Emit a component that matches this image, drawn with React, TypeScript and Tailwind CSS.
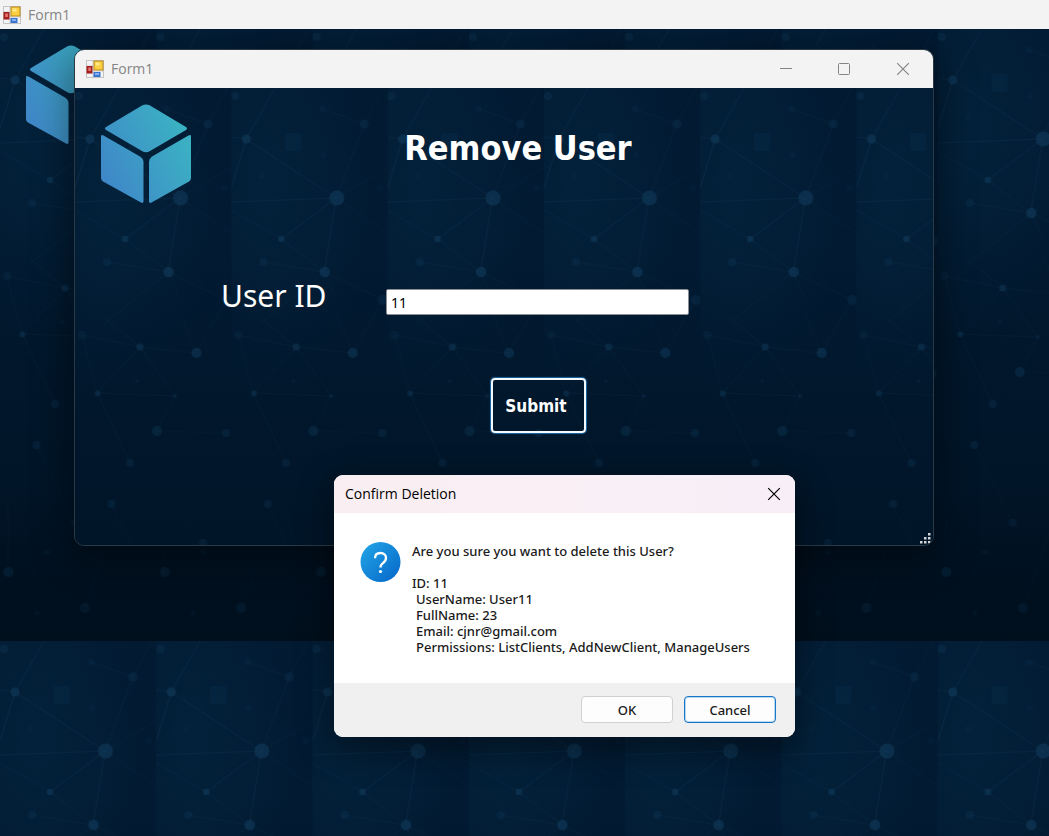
import { useId } from "react";

type Dot = [x: number, y: number, r: number, opacity: number];
type Line = [x1: number, y1: number, x2: number, y2: number, opacity: number];

const DOTS: Dot[] = [
  [4, 8, 4, 0.45],
  [15, 51, 4.5, 0.85],
  [91, 21, 3, 0.25],
  [133, 36, 4.5, 0.4],
  [92, 67, 3, 0.2],
  [30, 88, 2.5, 0.15],
  [149, 100, 3, 0.12],
  [105.5, 110, 7.5, 0.85],
  [50, 151, 3.2, 0.85],
  [32, 174, 4, 0.4],
  [93.5, 184, 5.2, 0.85],
  [152, 212, 5, 0.4],
  [7, 247, 4, 0.25],
  [65, 259, 3.5, 0.65],
  [121.5, 265, 5, 0.75],
  [22.5, 305.5, 3, 0.6],
  [100, 308, 2, 0.4],
  [62, 293, 2, 0.25],
  [82, 343, 5, 0.55],
  [151, 345, 4, 0.45],
  [55, 375, 4, 0.4],
  [36.5, 416, 4, 0.4],
  [128, 455, 4, 0.35],
  [75, 494, 4, 0.3],
  [47, 523, 3, 0.2],
  [8.5, 543, 5, 0.4],
  [85, 579, 5, 0.3],
  [37, 584, 2.5, 0.2],
];

const LINES: Line[] = [
  [15, 51, 44, 0, 0.6],
  [15, 51, 0, 100, 0.8],
  [0, 49, 15, 51, 0.5],
  [15, 51, 105, 110, 0.6],
  [91, 21, 133, 36, 0.35],
  [133, 36, 152, 0, 0.35],
  [133, 36, 105, 110, 0.4],
  [0, 114, 105, 110, 0.6],
  [0, 122, 50, 151, 0.35],
  [105, 110, 156, 80, 0.25],
  [105, 110, 156, 145, 0.25],
  [105, 110, 50, 151, 0.7],
  [105, 110, 93, 184, 0.7],
  [50, 151, 93, 184, 0.4],
  [32, 174, 93, 184, 0.4],
  [93, 184, 30, 235, 0.3],
  [93, 184, 104, 208, 0.3],
  [93, 184, 152, 212, 0.3],
  [30, 230, 65, 259, 0.35],
  [7, 247, 65, 259, 0.3],
  [65, 259, 121, 265, 0.35],
  [121, 265, 105, 225, 0.3],
  [121, 265, 152, 212, 0.35],
  [65, 259, 22, 305, 0.35],
  [65, 259, 100, 308, 0.35],
  [22, 305, 100, 308, 0.4],
  [7, 247, 22, 305, 0.25],
  [22, 305, 55, 375, 0.35],
  [100, 308, 82, 343, 0.25],
  [82, 343, 151, 345, 0.2],
  [36, 416, 75, 494, 0.2],
  [8, 543, 8, 470, 0.25],
  [85, 579, 128, 455, 0.15],
];

function NetworkBackdrop() {
  const id = useId();
  return (
    <svg aria-hidden="true" className="absolute inset-0 h-full w-full">
      <defs>
        <linearGradient id={`${id}-base`} x1="0" y1="0" x2="0" y2="1">
          <stop offset="0" stopColor="#021a32" />
          <stop offset="0.25" stopColor="#021b33" />
          <stop offset="0.5" stopColor="#01172c" />
          <stop offset="0.75" stopColor="#011528" />
          <stop offset="0.9" stopColor="#00101f" />
          <stop offset="1" stopColor="#000f1c" />
        </linearGradient>
        <radialGradient id={`${id}-glow`} gradientUnits="userSpaceOnUse" cx="35" cy="45" r="110" gradientTransform="scale(1 2)">
          <stop offset="0" stopColor="#062d48" stopOpacity="0.36" />
          <stop offset="1" stopColor="#062d48" stopOpacity="0" />
        </radialGradient>
        <pattern id={`${id}-tile`} width="156.3" height="612" patternUnits="userSpaceOnUse">
          <rect width="157" height="612" fill={`url(#${id}-base)`} />
          <rect width="157" height="612" fill={`url(#${id}-glow)`} />
          <rect x="54" y="45" width="16" height="18" rx="2" fill="#0a3655" opacity="0.22" />
          {LINES.map(([x1, y1, x2, y2, opacity], i) => (
            <line key={i} x1={x1} y1={y1} x2={x2} y2={y2} stroke="#1d4a6b" strokeWidth="0.8" opacity={opacity * 0.34} />
          ))}
          {DOTS.map(([cx, cy, r, opacity], i) => (
            <circle key={i} cx={cx} cy={cy} r={r} fill="#0f3a5c" opacity={opacity * 0.68} />
          ))}
        </pattern>
      </defs>
      <rect width="100%" height="100%" fill={`url(#${id}-tile)`} />
    </svg>
  );
}

function FormIcon() {
  return (
    <svg aria-hidden="true" viewBox="0 0 18 18" className="size-[18px] shrink-0">
      <rect x="0.5" y="0.5" width="17" height="17" fill="#f4f4f4" stroke="#c4c4c4" />
      <path d="M1 6h7M7 1v16M7 11h10M1 13h6" stroke="#cccccc" fill="none" />
      <rect x="7.500" y="0.500" width="10" height="10" fill="#b88a1c" />
      <rect x="8.500" y="1.500" width="8" height="8" fill="#fbcf3f" />
      <rect x="9.500" y="2.500" width="4" height="3" fill="#ffe98c" />
      <rect x="0.500" y="6" width="6" height="7.500" fill="#a32020" />
      <rect x="2.300" y="7.500" width="2.500" height="3.500" fill="#ea7a70" />
      <rect x="7.500" y="12" width="7" height="5" fill="#3b74cd" />
      <rect x="9" y="13" width="4" height="2" fill="#83b2f5" />
    </svg>
  );
}

function CubeLogo() {
  const id = useId();
  return (
    <svg role="img" aria-label="Cube logo" viewBox="0 0 92 100" className="block h-[100px] w-[92px]">
      <defs>
        <linearGradient id={id} gradientUnits="userSpaceOnUse" x1="5" y1="78" x2="90" y2="35">
          <stop offset="0" stopColor="#3f87c8" />
          <stop offset="1" stopColor="#3bb2c3" />
        </linearGradient>
      </defs>
      <g fill={`url(#${id})`}>
        <path d="M42 1.6Q46 -0.6 50 1.6L86 23Q88 24.5 86 26L50 47Q46 49.4 42 47L6 26Q4 24.5 6 23Z" />
        <path d="M1 32.5Q1 30.2 3.5 31.6L40 52.5Q43.5 54.7 43.5 58V97Q43.500 100 41 98.600L3 77.500Q1 76.300 1 74Z" />
        <path d="M91 32.500Q91 30.200 88.500 31.600L52 52.500Q49 54.700 49 58V97Q49 100 51.500 98.600L89 77.500Q91 76.300 91 74Z" />
      </g>
    </svg>
  );
}

function CloseGlyph() {
  return (
    <svg aria-hidden="true" viewBox="0 0 14 14" className="size-[14px]">
      <path d="M1.200 1.200 12.800 12.800M12.800 1.200 1.200 12.800" stroke="currentColor" strokeWidth="1.200" fill="none" />
    </svg>
  );
}

function RemoveUserWindow() {
  return (
    <section
      aria-label="Form1"
      className="absolute top-5 left-[74px] flex h-[497px] w-[860px] flex-col overflow-hidden rounded-[10px] border border-[#2b3944] shadow-[0_10px_36px_6px_rgba(0,0,0,0.4)]"
    >
      <header className="flex h-[38px] shrink-0 items-center gap-[7px] bg-[#f3f3f3] pl-[11px] text-[#858585]">
        <FormIcon />
        <span className="flex-1 text-[14px] leading-5">Form1</span>
        <div className="flex h-full">
          <button type="button" aria-label="Minimize" className="flex h-full w-[58px] items-center justify-center">
            <svg aria-hidden="true" viewBox="0 0 14 14" className="size-[14px]">
              <path d="M1 6.500h12" stroke="currentColor" />
            </svg>
          </button>
          <button type="button" aria-label="Maximize" className="flex h-full w-[58px] items-center justify-center">
            <svg aria-hidden="true" viewBox="0 0 14 14" className="size-[14px]">
              <rect x="1.500" y="1.500" width="11" height="11" rx="1" fill="none" stroke="currentColor" />
            </svg>
          </button>
          <button type="button" aria-label="Close" className="flex h-full w-[60px] items-center justify-center">
            <CloseGlyph />
          </button>
        </div>
      </header>
      <div className="relative flex-1">
        <NetworkBackdrop />
        <div className="absolute top-4 left-[25px]">
          <CubeLogo />
        </div>
        <form
          className="relative flex flex-col items-center pt-[38px] font-['Noto_Sans',sans-serif]"
          onSubmit={(event) => event.preventDefault()}
        >
          <h1 className="pl-7 font-['DejaVu_Sans_Condensed','Noto_Sans',sans-serif] text-[34px] leading-11 font-bold text-white">
            Remove User
          </h1>
          <div className="flex items-center gap-[62px] self-start pt-[104px] pl-[146px]">
            <label htmlFor="user-id" className="w-[103px] text-[30px] leading-11 whitespace-nowrap text-white">
              User ID
            </label>
            <input
              id="user-id"
              type="text"
              defaultValue="11"
              className="mt-3 h-[26px] w-[303px] rounded-[2px] border border-[#8b8f94] bg-white px-1 text-[14px] leading-5 text-black outline-none"
            />
          </div>
          <button
            type="submit"
            className="mt-[60px] ml-[68px] h-[55px] w-[95px] rounded-[4px] border-2 border-[#f2faff] pr-1 font-['DejaVu_Sans_Condensed','Noto_Sans',sans-serif] text-[17px] leading-5 font-bold text-white shadow-[0_0_1px_1px_#1c6ba8]"
          >
            Submit
          </button>
        </form>
        <svg aria-hidden="true" viewBox="0 0 12 12" className="absolute right-px bottom-px size-3 text-[#d4d4d4]">
          <path d="M8 1h2.500v2.500H8zM4 5h2.500v2.500H4zM8 5h2.500v2.500H8zM0 9h2.500v2.500H0zM4 9h2.500v2.500H4zM8 9h2.500v2.500H8z" fill="currentColor" />
        </svg>
      </div>
    </section>
  );
}

const DETAILS = [
  "UserName: User11",
  "FullName: 23",
  "Email: cjnr@gmail.com",
  "Permissions: ListClients, AddNewClient, ManageUsers",
];

function ConfirmDialog() {
  const id = useId();
  return (
    <section
      role="dialog"
      aria-labelledby="confirm-title"
      className="absolute top-[446px] left-[334px] w-[461px] overflow-hidden rounded-[9px] bg-white text-black shadow-[0_10px_32px_4px_rgba(0,0,0,0.4)]"
    >
      <header className="flex h-[38px] items-center justify-between bg-linear-to-r from-[#f9eff2] to-[#f8eef7] pr-3.5 pl-[11px]">
        <h2 id="confirm-title" className="text-[14px] leading-5">
          Confirm Deletion
        </h2>
        <button type="button" aria-label="Close">
          <CloseGlyph />
        </button>
      </header>
      <div className="flex gap-[11px] pt-[29px] pb-7 pl-[26px]">
        <svg aria-hidden="true" viewBox="0 0 41 41" className="size-[41px] shrink-0">
          <defs>
            <linearGradient id={id} x1="0" y1="0" x2="1" y2="1">
              <stop offset="0" stopColor="#24a7e6" />
              <stop offset="1" stopColor="#0465c9" />
            </linearGradient>
          </defs>
          <circle cx="20.500" cy="20" r="20" fill={`url(#${id})`} />
          <path
            d="M15 16.300C15 12.700 17.200 11 20.500 11S26 13 26 15.900C26 18.400 24.700 19.700 22.900 21.100C21.200 22.400 20.500 23.500 20.500 25.500"
            fill="none"
            stroke="#fff"
            strokeWidth="2.300"
          />
          <circle cx="20.500" cy="29.500" r="1.600" fill="#fff" />
        </svg>
        <div className="pt-px font-['Noto_Sans',sans-serif] text-[13px] leading-4 font-medium text-[#1a1a1a]">
          <p>Are you sure you want to delete this User?</p>
          <p className="pt-4">ID: 11</p>
          {DETAILS.map((line) => (
            <p key={line} className="pl-1 whitespace-nowrap">
              {line}
            </p>
          ))}
        </div>
      </div>
      <footer className="flex justify-end gap-[11px] bg-[#f0f0f0] px-[19px] pt-[13px] pb-3.5 font-['Noto_Sans',sans-serif] text-[13px] leading-5 font-medium text-[#1a1a1a]">
        <button type="button" className="h-[27px] w-[92px] rounded-[4px] border border-[#d0d0d0] bg-[#fdfdfd]">
          OK
        </button>
        <button type="button" className="h-[27px] w-[92px] rounded-[4px] border border-[#1677c8] bg-[#fdfdfd] shadow-[inset_0_0_0_1px_#b8d8f0]">
          Cancel
        </button>
      </footer>
    </section>
  );
}

export default function App() {
  return (
    <main className="flex min-h-screen flex-col bg-[#00101f] font-['Open_Sans','Noto_Sans',sans-serif]">
      <header className="flex h-[29px] items-center gap-[7px] bg-[#f3f3f3] pl-[3px] text-[#858585]">
        <FormIcon />
        <span className="text-[14px] leading-5">Form1</span>
      </header>
      <div className="relative flex-1 overflow-hidden">
        <NetworkBackdrop />
        <div className="absolute top-4 left-[25px]">
          <CubeLogo />
        </div>
        <RemoveUserWindow />
        <ConfirmDialog />
      </div>
    </main>
  );
}
